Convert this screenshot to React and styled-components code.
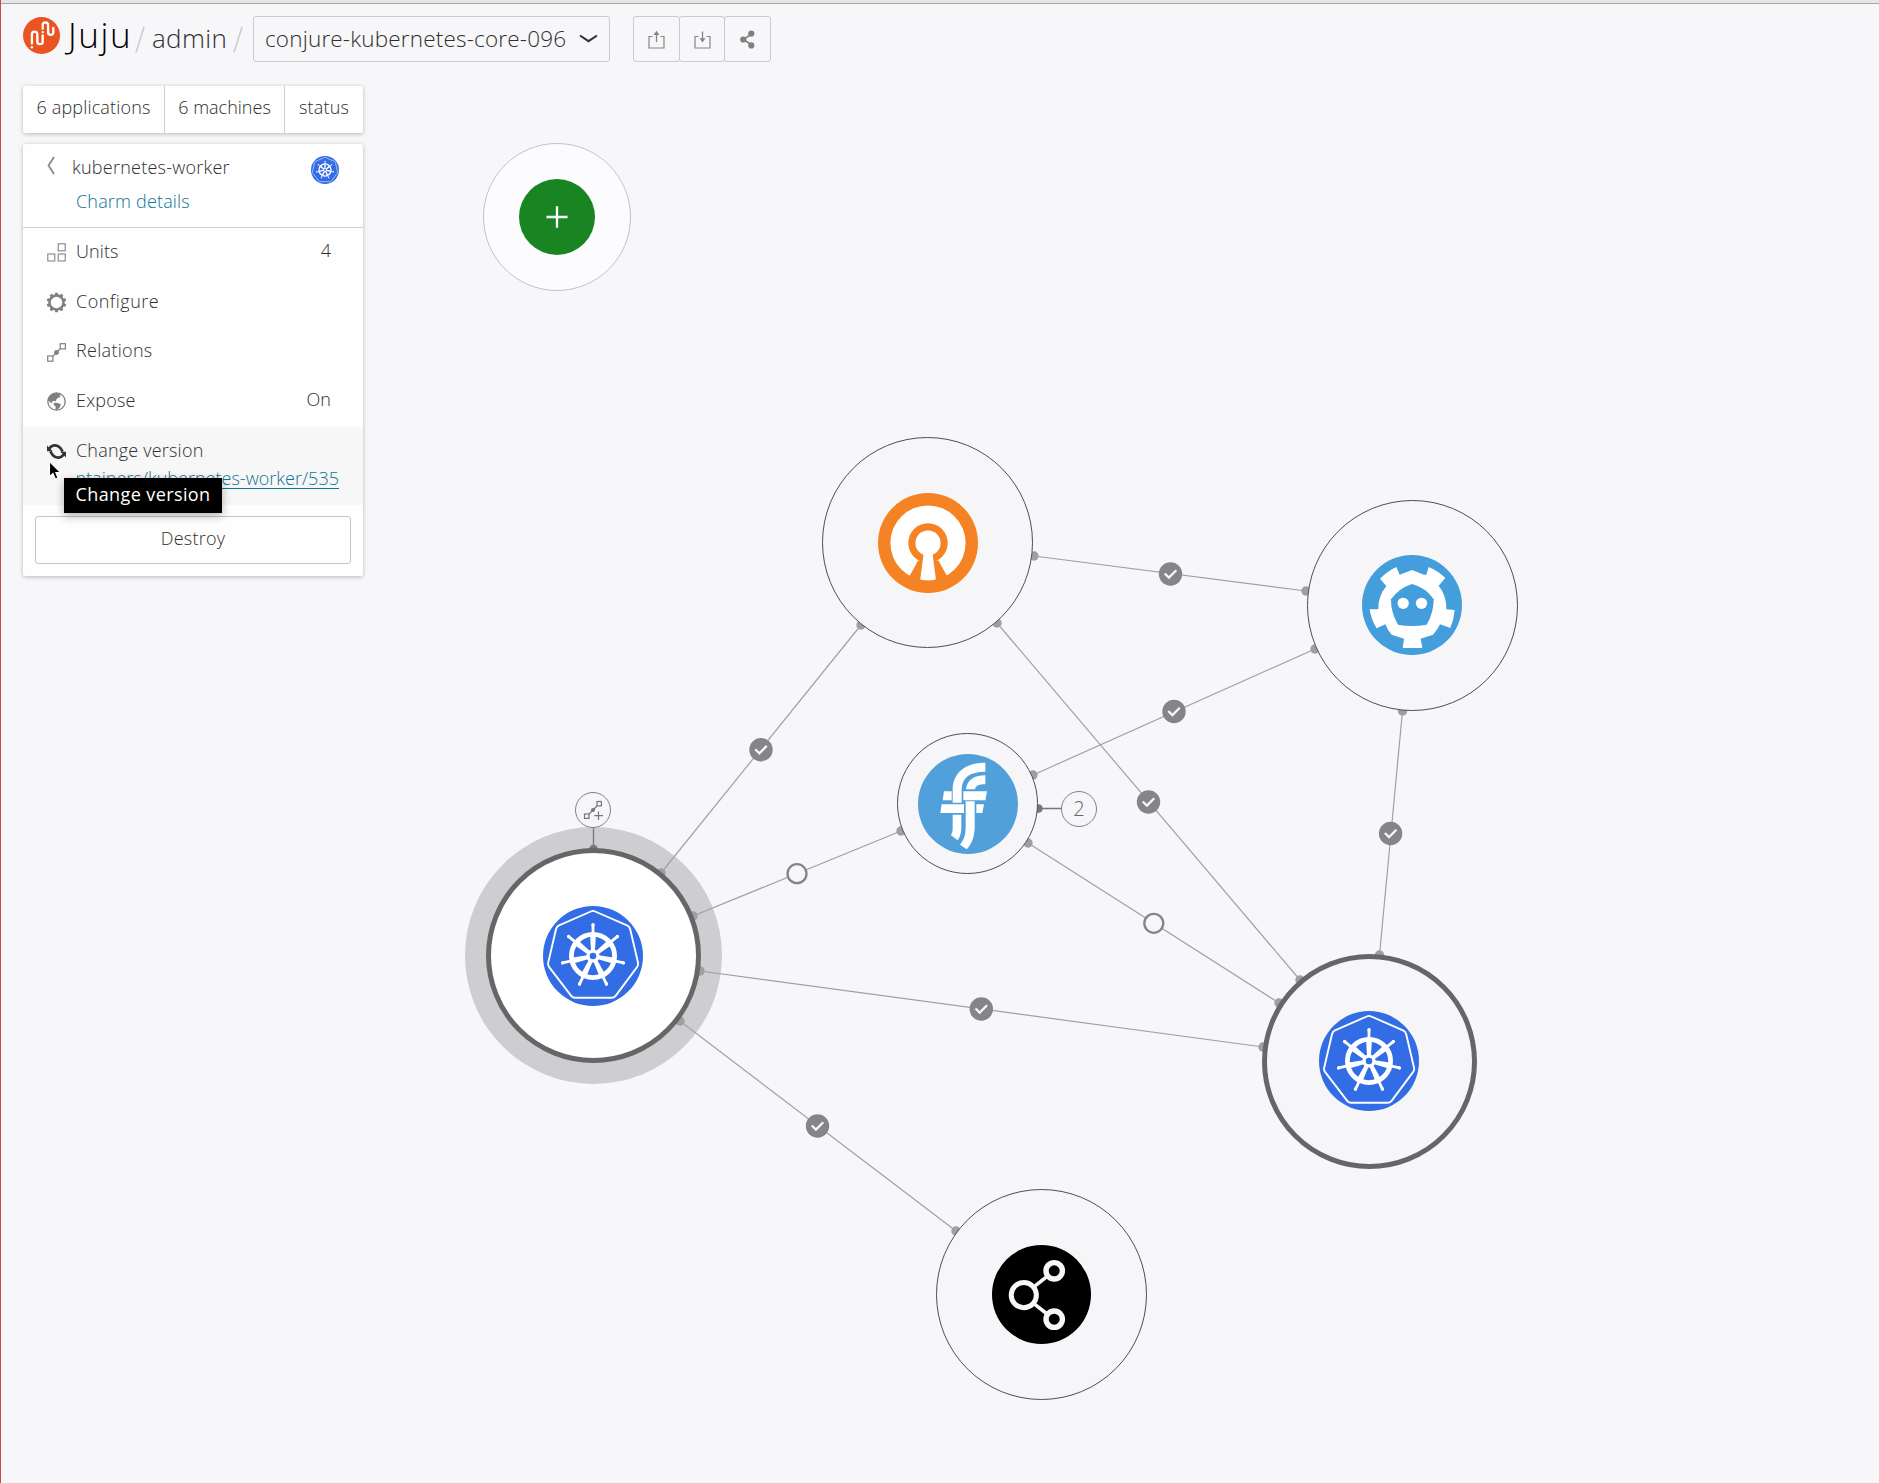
import React from "react";
import styled, { createGlobalStyle, css } from "styled-components";

const Global = createGlobalStyle`
  * { box-sizing: border-box; }
  html, body { margin: 0; padding: 0; }
  body {
    background: #f7f6f9;
    font-family: "Open Sans", "Noto Sans", sans-serif;
    font-weight: 330;
    color: #2f2f2f;
    overflow: hidden;
  }
`;

const Page = styled.div`
  position: relative;
  width: 1879px;
  height: 1483px;
  overflow: hidden;
  background: #f7f6f9;
  border-left: 1px solid #cd4a4a;
`;

const TopStrip = styled.div`
  height: 4px;
  background: #e6e6e6;
  border-bottom: 1px solid #a6a6a6;
`;

/* ---------- header ---------- */

const Header = styled.header`
  display: flex;
  align-items: flex-start;
  height: 82px;
  padding: 12px 0 0 22px;
`;

const Brand = styled.div`
  display: flex;
  align-items: flex-start;
  width: 111px;
  height: 46px;
  margin-top: -1px;
`;

const LogoSvg = styled.svg`
  flex: none;
  width: 37px;
  height: 37px;
  margin-top: 2px;
`;

const Wordmark = styled.span`
  margin: -1px 0 0 8px;
  font-size: 35px;
  font-weight: 320;
  line-height: 42px;
  color: #000;
  letter-spacing: ${(p) => p.$track}px;
`;

const Slash = styled.svg`
  flex: none;
  width: 12px;
  height: 28px;
  margin-top: 10px;
`;

const Crumb = styled.span`
  width: 86px;
  padding-left: 6px;
  font-size: 26px;
  line-height: 44px;
  letter-spacing: ${(p) => p.$track}px;
  white-space: nowrap;
`;

const ModelSelect = styled.button`
  display: flex;
  align-items: center;
  justify-content: space-between;
  width: 357px;
  height: 46px;
  margin: 0 23px 0 9px;
  padding: 0 11px 0 11px;
  border: 1px solid #cbcbcd;
  border-radius: 3px;
  background: transparent;
  font: inherit;
  font-size: 22.5px;
  line-height: 42px;
  color: #2f2f2f;
  letter-spacing: ${(p) => p.$track}px;
  white-space: nowrap;
`;

const SelectText = styled.span`
  margin-top: -1px;
`;

const ButtonGroup = styled.div`
  display: flex;
`;

const IconButton = styled.button`
  display: flex;
  align-items: center;
  justify-content: center;
  width: ${(p) => p.$w}px;
  height: 46px;
  padding: 0;
  border: 1px solid #cbcbcd;
  border-radius: 3px;
  background: transparent;
  & + & { margin-left: -1px; }
`;

/* ---------- side column ---------- */

const Side = styled.aside`
  display: flex;
  flex-direction: column;
  gap: 11px;
  width: 340px;
  margin-left: 22px;
  position: relative;
  z-index: 2;
  font-size: 18px;
`;

const card = css`
  background: #fefefe;
  box-shadow: 0 1px 4px rgba(0, 0, 0, 0.26);
  border-radius: 2px;
`;

const Tabs = styled.nav`
  ${card}
  display: flex;
  height: 47px;
`;

const Tab = styled.span`
  width: ${(p) => p.$w}px;
  text-align: center;
  line-height: 43px;
  letter-spacing: ${(p) => p.$track}px;
  white-space: nowrap;
  & + & { border-left: 1px solid #cfcfcf; }
`;

const Panel = styled.section`
  ${card}
  height: 432px;
`;

const PanelHead = styled.div`
  display: flex;
  align-items: flex-start;
  height: 84px;
  padding: 12px 24px 0 24px;
  border-bottom: 1px solid #cdcdcd;
`;

const BackIcon = styled.svg`
  width: 8px;
  height: 19px;
  margin-right: 17px;
`;

const Titles = styled.div`
  flex: 1;
  display: flex;
  flex-direction: column;
  margin-top: -1px;
`;

const Title = styled.span`
  line-height: 24px;
  letter-spacing: ${(p) => p.$track}px;
`;

const DetailsLink = styled.a`
  margin: 10px 0 0 4px;
  line-height: 24px;
  color: #0f7594;
  letter-spacing: ${(p) => p.$track}px;
`;

const Row = styled.div`
  display: flex;
  align-items: flex-start;
  align-content: flex-start;
  flex-wrap: wrap;
  height: ${(p) => (p.$active ? 78.2 : 49.7)}px;
  padding: 11px 32px 0 24px;
  background: ${(p) => (p.$active ? "#f7f7f7" : "transparent")};
`;

const RowIcon = styled.svg`
  width: 19px;
  height: 19px;
  margin: 4.3px 10px 0 0;
  overflow: visible;
`;

const RowLabel = styled.span`
  flex: 1;
  line-height: 24px;
  letter-spacing: ${(p) => p.$track}px;
`;

const RowValue = styled.span`
  line-height: 22px;
`;

const VersionLink = styled.a`
  display: flex;
  justify-content: flex-end;
  width: 262px;
  margin: 4px -8px 0 30px;
  overflow: hidden;
  line-height: 24px;
  color: #0f7594;
  text-decoration: underline;
  text-decoration-thickness: 1px;
  text-underline-offset: 3px;
  letter-spacing: ${(p) => p.$track}px;
  white-space: nowrap;
`;

const DestroyButton = styled.button`
  display: block;
  width: 316px;
  height: 48px;
  margin: 11px 0 0 12px;
  padding: 0 0 4px;
  border: 1px solid #c6c6c8;
  border-radius: 3px;
  background: #fefefe;
  font: inherit;
  color: #2f2f2f;
  letter-spacing: ${(p) => p.$track}px;
`;

const Tooltip = styled.div`
  position: absolute;
  z-index: 4;
  left: 63px;
  top: 478px;
  width: 158px;
  height: 35px;
  background: #000;
  color: #fff;
  font-size: 18px;
  font-weight: 400;
  line-height: 33px;
  text-align: center;
  letter-spacing: ${(p) => p.$track}px;
  white-space: nowrap;
  box-shadow: 0 3px 9px rgba(0, 0, 0, 0.3);
`;

const Pointer = styled.svg`
  position: absolute;
  z-index: 5;
  left: 47px;
  top: 460px;
  width: 14px;
  height: 21px;
`;

/* ---------- canvas ---------- */

const Canvas = styled.main`
  position: absolute;
  left: -1px;
  top: 0;
  width: 1879px;
  height: 1483px;
`;

const Edges = styled.svg`
  position: absolute;
  left: 0;
  top: 0;
  width: 1879px;
  height: 1483px;
`;

const Node = styled.div`
  position: absolute;
  left: ${(p) => p.$x - p.$r}px;
  top: ${(p) => p.$y - p.$r}px;
  width: ${(p) => p.$r * 2}px;
  height: ${(p) => p.$r * 2}px;
  display: flex;
  align-items: center;
  justify-content: center;
  border-radius: 50%;
  border: ${(p) => p.$stroke || 1}px solid ${(p) => p.$line || "#4f4e51"};
  background: ${(p) => p.$fill || "#f6f5f8"};
`;

const Halo = styled.div`
  position: absolute;
  left: 465px;
  top: 827px;
  width: 257px;
  height: 257px;
  border-radius: 50%;
  background: #cecdcf;
`;

const Glyph = styled.svg`
  flex: none;
  width: ${(p) => p.$s}px;
  height: ${(p) => p.$s}px;
  overflow: visible;
`;

const Count = styled.span`
  font-size: 20px;
  font-weight: 300;
  line-height: 30px;
  color: #666;
`;

/* ---------- drawings ---------- */

const spokes = [0, 1, 2, 3, 4, 5, 6].map((i) => (i * 360) / 7);

function Kubernetes({ size = 100 }) {
  return (
    <Glyph $s={size} viewBox="-50 -50 100 100">
      <circle r="50" fill="#326de6" />
      <path
        d="M-2.2 -44.5Q0 -45.8 2.2 -44.5L34 -30.6Q36.6 -29.4 37.2 -26.8L45 6.6Q45.6 9.2 44 11.2L22.6 39.8Q21 41.8 18.4 41.8L-17.8 41.8Q-20.2 41.8 -21.8 39.8L-43.8 11.2Q-45.4 9.2 -44.8 6.6L-37 -26.8Q-36.4 -29.4 -34 -30.6Z"
        fill="none"
        stroke="#fff"
        strokeWidth="1.9"
      />
      <circle r="21.6" fill="none" stroke="#fff" strokeWidth="4.8" />
      {spokes.map((a) => (
        <g key={a} transform={`rotate(${a})`}>
          <path d="M-1.9 -4L-2.9 -20H2.9L1.9 -4Z" fill="#fff" />
          <path d="M0 -22V-31.4" stroke="#fff" strokeWidth="2.8" strokeLinecap="round" />
          <circle cy="-31" r="1.7" fill="#fff" />
        </g>
      ))}
      <circle r="6.6" fill="#fff" />
      <circle r="3.3" fill="#326de6" />
    </Glyph>
  );
}

function EasyRsa() {
  return (
    <Glyph $s={100} viewBox="-50 -50 100 100">
      <circle r="50" fill="#f58223" />
      <circle r="37.6" fill="#fff" />
      <circle r="19.7" fill="#f58223" />
      <path d="M-9.8 17.5L-18.4 33L-14 42H14L19 33L10.4 17.5Z" fill="#f58223" />
      <circle r="12.6" fill="#fff" />
      <path d="M-4.6 10V12.5L-7.8 36.4Q0 38.6 7.9 36.4L4.8 12.5V10Z" fill="#fff" />
    </Glyph>
  );
}

function Etcd() {
  return (
    <Glyph $s={100} viewBox="217 224 300 300">
      <circle cx="367" cy="374" r="150" fill="#439edb" />
      <path
        d="M367 269L403 283H410L417 260Q444 271 467 293L447 316Q471 346 470 387L495 389Q493 418 482 443L451 432Q445 447 430 463L393 475L398 503H339L343 475L306 463Q294 450 287 432L261 444Q244 417 240 387H266Q264 350 290 317L271 295Q294 272 320 260L330 283Z"
        fill="#fff"
      />
      <path
        d="M367 311Q409 322 432 357Q432 398 411 433Q367 441 325 433Q303 396 304 357Q327 324 367 311Z"
        fill="#439edb"
      />
      <circle cx="340.500" cy="369" r="17" fill="#fff" />
      <circle cx="395.500" cy="369" r="17" fill="#fff" />
    </Glyph>
  );
}

function Flannel() {
  return (
    <Glyph $s={100} viewBox="113 101 300 300">
      <circle cx="263" cy="251" r="150" fill="#51a0da" />
      <g fill="#fff">
        <path d="M315 127C252 127 217 160 217 208V247H244V208C244 173 268 154 315 154Z" />
        <path d="M315 165C279 165 261 180 257 207H284C286 196 296 192 315 192Z" />
        <path d="M191 213H214V240H187Z" />
        <path d="M249 213H320L315 240H249Z" />
        <path d="M184 252H251V278H180Z" />
        <path d="M288 252H311L306 278H288Z" />
        <path d="M217 283H243V325Q242 345 232 360L212 345Q217 337 217 325Z" />
        <path d="M256 243H283V322C282 354 271 374 259 387L239 373C251 358 256 344 256 320Z" />
      </g>
    </Glyph>
  );
}

function LoadBalancer() {
  return (
    <Glyph $s={99} viewBox="-49.5 -49.5 99 99">
      <circle r="49.5" fill="#000" />
      <g fill="none" stroke="#f7f6f9">
        <path d="M-7 -8.200L5 -17.700M-7 9.600L5 19" strokeWidth="3.6" />
        <circle cx="-17.700" cy="0.600" r="12.600" strokeWidth="5" />
        <circle cx="12.700" cy="-23.700" r="8.200" strokeWidth="5.400" />
        <circle cx="12.700" cy="24.700" r="8.200" strokeWidth="5.400" />
      </g>
    </Glyph>
  );
}

const Plus = () => (
  <Glyph $s={76} viewBox="-38 -38 76 76">
    <circle r="38" fill="#198522" />
    <path d="M-10.500 0H10.500M0 -10.800V10.800" stroke="#fff" strokeWidth="2.300" />
  </Glyph>
);

const AddRelation = () => (
  <Glyph $s={20} viewBox="0 0 20 20" fill="none" stroke="#77767a" strokeWidth="1.200">
    <rect x="1.500" y="14" width="4.400" height="4.400" />
    <rect x="14" y="1.500" width="4.400" height="4.400" />
    <path d="M6 14L14 6M15.500 11.500V20M11.200 15.700H20" />
    <circle cx="10" cy="10" r="2" fill="#77767a" stroke="none" />
  </Glyph>
);

const JujuLogo = () => (
  <LogoSvg viewBox="0 0 37 37">
    <circle cx="18.500" cy="18.500" r="18.500" fill="#e95420" />
    <g fill="none" stroke="#fff" strokeWidth="2.300" strokeLinecap="round">
      <path d="M8.900 26.500V17.300A2.700 2.700 0 0 1 14.300 17.300V24.500A2.700 2.700 0 0 0 19.700 24.500V18.500" />
      <path d="M19.700 11.800V8A2.700 2.700 0 0 1 25.100 8V15.200A2.600 2.600 0 0 0 30.300 15.200V11" />
    </g>
    <circle cx="8.900" cy="30.200" r="1.200" fill="#fff" />
    <circle cx="19.700" cy="15.100" r="1.200" fill="#fff" />
  </LogoSvg>
);

const Divider = () => (
  <Slash viewBox="0 0 12 28">
    <path d="M10 1L2 26.500" stroke="#cfcfd1" strokeWidth="1.700" />
  </Slash>
);

const gearTeeth = Array.from({ length: 10 }, (_, i) => i * 36);

const icons = {
  units: (
    <g fill="none" stroke="#858585" strokeWidth="1.100">
      <rect x="11.200" y="0.800" width="7" height="7" />
      <rect x="0.800" y="11" width="7" height="7" />
      <rect x="11.200" y="11" width="7" height="7" />
    </g>
  ),
  configure: (
    <g transform="translate(9.500 9.500)">
      <circle r="7" fill="none" stroke="#808080" strokeWidth="2.500" />
      {gearTeeth.map((a) => (
        <path key={a} d="M-1.700 -7.500L-1.300 -9.800H1.300L1.700 -7.500Z" fill="#808080" transform={`rotate(${a})`} />
      ))}
    </g>
  ),
  relations: (
    <g fill="none" stroke="#808080" strokeWidth="1.200">
      <rect x="0.700" y="13" width="5.200" height="5.200" />
      <rect x="13.200" y="0.700" width="5.200" height="5.200" />
      <path d="M6 13L13 6" />
      <circle cx="9.500" cy="9.500" r="2.400" fill="#808080" stroke="none" />
    </g>
  ),
  expose: (
    <g>
      <circle cx="9.500" cy="9.500" r="8.700" fill="none" stroke="#808080" strokeWidth="1.300" />
      <path
        d="M1 8.500C1.500 4 5.500 1 9.500 0.900L14.500 2.400L12.600 3.600L13.600 5L11.600 5.400L9.600 7L8.600 9.600L6.800 8.800L5 9.400L6 11L3.600 10.400Z"
        fill="#808080"
      />
      <path d="M7 10.800L11 11L14 12.600L12.600 15.400L10 18L8.400 17.400L8.800 14.800L6.600 12.800Z" fill="#808080" />
    </g>
  ),
  version: (
    <g fill="none" stroke="#333" strokeWidth="2.600">
      <path d="M2.400 6.600C4.400 2.800 10 2.200 13 5.600C14.200 7 14.800 8 15.600 9.600" />
      <path d="M16.600 12.400C14.600 16.200 9 16.800 6 13.400C4.800 12 4.200 11 3.400 9.400" />
      <path d="M0 3.600V9.200H5.600ZM19 15.400V9.800H13.400Z" fill="#333" stroke="none" />
    </g>
  ),
};

/* ---------- data ---------- */

const rows = [
  { icon: "units", label: "Units", value: "4", track: 0.1 },
  { icon: "configure", label: "Configure", track: 0.5 },
  { icon: "relations", label: "Relations", track: 0.3 },
  { icon: "expose", label: "Expose", value: "On", track: 0.2 },
];

const edges = [
  { a: [1034, 556], b: [1306, 591], m: [1170.5, 574], ok: true },
  { a: [861, 625], b: [661, 873], m: [761, 749.7], ok: true },
  { a: [997, 623], b: [1300, 980], m: [1148.5, 802], ok: true },
  { a: [1033, 775], b: [1315, 649], m: [1174, 711.5], ok: true },
  { a: [901, 831], b: [693, 916], m: [797, 873.7], ok: false },
  { a: [1028, 843], b: [1279, 1003], m: [1153.8, 923.3], ok: false },
  { a: [700, 971], b: [1263, 1047], m: [981.3, 1009], ok: true },
  { a: [680, 1021], b: [956, 1231], m: [817.5, 1126], ok: true },
  { a: [1402.5, 711], b: [1379.5, 955], m: [1390.6, 833.5], ok: true },
];

export default function App() {
  return (
    <Page>
      <Global />
      <Canvas>
        <Halo />
        <Edges viewBox="0 0 1879 1483">
          <g stroke="#a1a0a3" strokeWidth="1.200">
            {edges.map((e, i) => (
              <line key={i} x1={e.a[0]} y1={e.a[1]} x2={e.b[0]} y2={e.b[1]} />
            ))}
          </g>
          <g fill="#9f9ea1">
            {edges.map((e, i) => (
              <React.Fragment key={i}>
                <circle cx={e.a[0]} cy={e.a[1]} r="4.700" />
                <circle cx={e.b[0]} cy={e.b[1]} r="4.700" />
              </React.Fragment>
            ))}
          </g>
          <path d="M1038 808.500H1061M593.500 827V850" stroke="#77767a" strokeWidth="1.300" />
          <circle cx="1038.500" cy="808.500" r="4.300" fill="#77767a" />
          <circle cx="593.500" cy="849" r="4.300" fill="#77767a" />
          {edges.map((e, i) => (
            <g key={i} transform={`translate(${e.m[0]} ${e.m[1]})`}>
              {e.ok ? (
                <>
                  <circle r="11.700" fill="#858487" />
                  <path d="M-5.800 -0.500L-1.600 3.600L5.800 -3.800" fill="none" stroke="#f7f6f9" strokeWidth="2.300" />
                </>
              ) : (
                <circle r="9.500" fill="#f7f6f9" stroke="#858487" strokeWidth="2.300" />
              )}
            </g>
          ))}
        </Edges>
        <Node $x={556.5} $y={217} $r={74} $line="#c3c2c5" $fill="#fcfbfd">
          <Plus />
        </Node>
        <Node $x={927.9} $y={542.5} $r={105.5}>
          <EasyRsa />
        </Node>
        <Node $x={1412.4} $y={605} $r={105.5}>
          <Etcd />
        </Node>
        <Node $x={967.7} $y={803.8} $r={70.5}>
          <Flannel />
        </Node>
        <Node $x={593.4} $y={955.5} $r={107.5} $stroke={5} $line="#666568" $fill="#fff">
          <Kubernetes />
        </Node>
        <Node $x={1369} $y={1061} $r={107.5} $stroke={5} $line="#666568">
          <Kubernetes />
        </Node>
        <Node $x={1041.5} $y={1294.9} $r={105.5}>
          <LoadBalancer />
        </Node>
        <Node $x={1079} $y={808.5} $r={18} $line="#828184">
          <Count>2</Count>
        </Node>
        <Node $x={593.3} $y={809.5} $r={18} $line="#828184">
          <AddRelation />
        </Node>
      </Canvas>

      <TopStrip />
      <Header>
        <Brand>
          <JujuLogo />
          <Wordmark $track={1.6}>Juju</Wordmark>
        </Brand>
        <Divider />
        <Crumb $track={0.35}>admin</Crumb>
        <Divider />
        <ModelSelect $track={0.17}>
          <SelectText>conjure-kubernetes-core-096</SelectText>
          <Glyph $s={19} viewBox="0 0 19 19">
            <path d="M1 5.500C4 7.500 7 9.500 9.500 11.200C12 9.500 15 7.500 18 5.500" fill="none" stroke="#333" strokeWidth="2" />
          </Glyph>
        </ModelSelect>
        <ButtonGroup>
          <IconButton $w={47}>
            <Glyph $s={19} viewBox="0 0 19 19">
              <path d="M5.500 6.500H2V18H17V6.500H13.500" fill="none" stroke="#858585" strokeWidth="1.200" />
              <path d="M9.500 12V3" stroke="#858585" strokeWidth="1.300" />
              <path d="M6.500 5L9.500 0.800L12.500 5Z" fill="#858585" />
            </Glyph>
          </IconButton>
          <IconButton $w={46}>
            <Glyph $s={19} viewBox="0 0 19 19">
              <path d="M5.500 6.500H2V18H17V6.500H13.500" fill="none" stroke="#858585" strokeWidth="1.200" />
              <path d="M9.500 1.500V9.500" stroke="#858585" strokeWidth="1.300" />
              <path d="M6.500 8.200L9.500 12.500L12.500 8.200Z" fill="#858585" />
            </Glyph>
          </IconButton>
          <IconButton $w={47}>
            <Glyph $s={19} viewBox="0 0 19 19">
              <path d="M13.500 4L5.500 9.500L13.500 15" fill="none" stroke="#858585" strokeWidth="1.700" />
              <g fill="#808080">
                <circle cx="5.200" cy="9.500" r="3.100" />
                <circle cx="13.300" cy="3.600" r="3.100" />
                <circle cx="13.300" cy="15.400" r="3.100" />
              </g>
            </Glyph>
          </IconButton>
        </ButtonGroup>
      </Header>

      <Side>
        <Tabs>
          <Tab $w={141} $track={0.16}>6 applications</Tab>
          <Tab $w={120} $track={0}>6 machines</Tab>
          <Tab $w={79} $track={0.2}>status</Tab>
        </Tabs>
        <Panel>
          <PanelHead>
            <BackIcon viewBox="0 0 8 19">
              <path d="M7 1L1.500 9.500L7 18" fill="none" stroke="#858585" strokeWidth="1.700" />
            </BackIcon>
            <Titles>
              <Title $track={0.24}>kubernetes-worker</Title>
              <DetailsLink $track={0.18}>Charm details</DetailsLink>
            </Titles>
            <Kubernetes size={28} />
          </PanelHead>
          {rows.map((r) => (
            <Row key={r.label}>
              <RowIcon viewBox="0 0 19 19">{icons[r.icon]}</RowIcon>
              <RowLabel $track={r.track}>{r.label}</RowLabel>
              {r.value && <RowValue>{r.value}</RowValue>}
            </Row>
          ))}
          <Row $active>
            <RowIcon viewBox="0 0 19 19">{icons.version}</RowIcon>
            <RowLabel $track={0.2}>Change version</RowLabel>
            <VersionLink $track={0.02}>containers/kubernetes-worker/535</VersionLink>
          </Row>
          <DestroyButton $track={0.25}>Destroy</DestroyButton>
        </Panel>
      </Side>
      <Tooltip $track={0.4}>Change version</Tooltip>
      <Pointer viewBox="0 0 14 21">
        <path d="M1.500 1.500V16.500L5 13.500L7.300 19L10 18L7.800 12.600H12.600Z" fill="#000" stroke="#fff" strokeWidth="1.100" />
      </Pointer>
    </Page>
  );
}
